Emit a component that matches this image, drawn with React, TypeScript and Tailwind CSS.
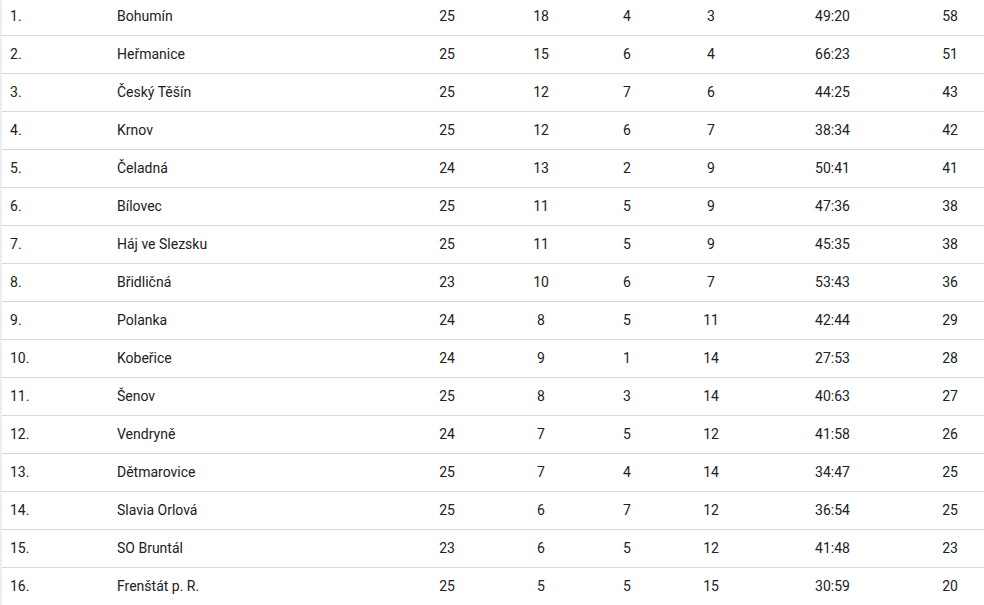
import React from 'react';

type Row = [string, number, number, number, number, string, number];

const rows: Row[] = [
  ['Bohumín', 25, 18, 4, 3, '49:20', 58],
  ['Heřmanice', 25, 15, 6, 4, '66:23', 51],
  ['Český Těšín', 25, 12, 7, 6, '44:25', 43],
  ['Krnov', 25, 12, 6, 7, '38:34', 42],
  ['Čeladná', 24, 13, 2, 9, '50:41', 41],
  ['Bílovec', 25, 11, 5, 9, '47:36', 38],
  ['Háj ve Slezsku', 25, 11, 5, 9, '45:35', 38],
  ['Břidličná', 23, 10, 6, 7, '53:43', 36],
  ['Polanka', 24, 8, 5, 11, '42:44', 29],
  ['Kobeřice', 24, 9, 1, 14, '27:53', 28],
  ['Šenov', 25, 8, 3, 14, '40:63', 27],
  ['Vendryně', 24, 7, 5, 12, '41:58', 26],
  ['Dětmarovice', 25, 7, 4, 14, '34:47', 25],
  ['Slavia Orlová', 25, 6, 7, 12, '36:54', 25],
  ['SO Bruntál', 23, 6, 5, 12, '41:48', 23],
  ['Frenštát p. R.', 25, 5, 5, 15, '30:59', 20],
];

export default function App() {
  return (
    <div className="h-[605px] w-[984px] overflow-hidden bg-white font-['Roboto',sans-serif] text-[14px] text-[#212121]">
      <div className="-mt-[2px] border-l-2 border-[#eceef1]">
        {rows.map((r, i) => (
          <div
            key={r[0]}
            className="grid h-[38px] grid-cols-[107px_284px_108px_80px_92px_76px_167px_68px] items-center border-b border-[#d6d8db]"
          >
            <span className="pl-2">{i + 1}.</span>
            <span className="pl-2">{r[0]}</span>
            <span className="text-center">{r[1]}</span>
            <span className="text-center">{r[2]}</span>
            <span className="text-center">{r[3]}</span>
            <span className="text-center">{r[4]}</span>
            <span className="text-center">{r[5]}</span>
            <span className="text-center">{r[6]}</span>
          </div>
        ))}
      </div>
    </div>
  );
}
